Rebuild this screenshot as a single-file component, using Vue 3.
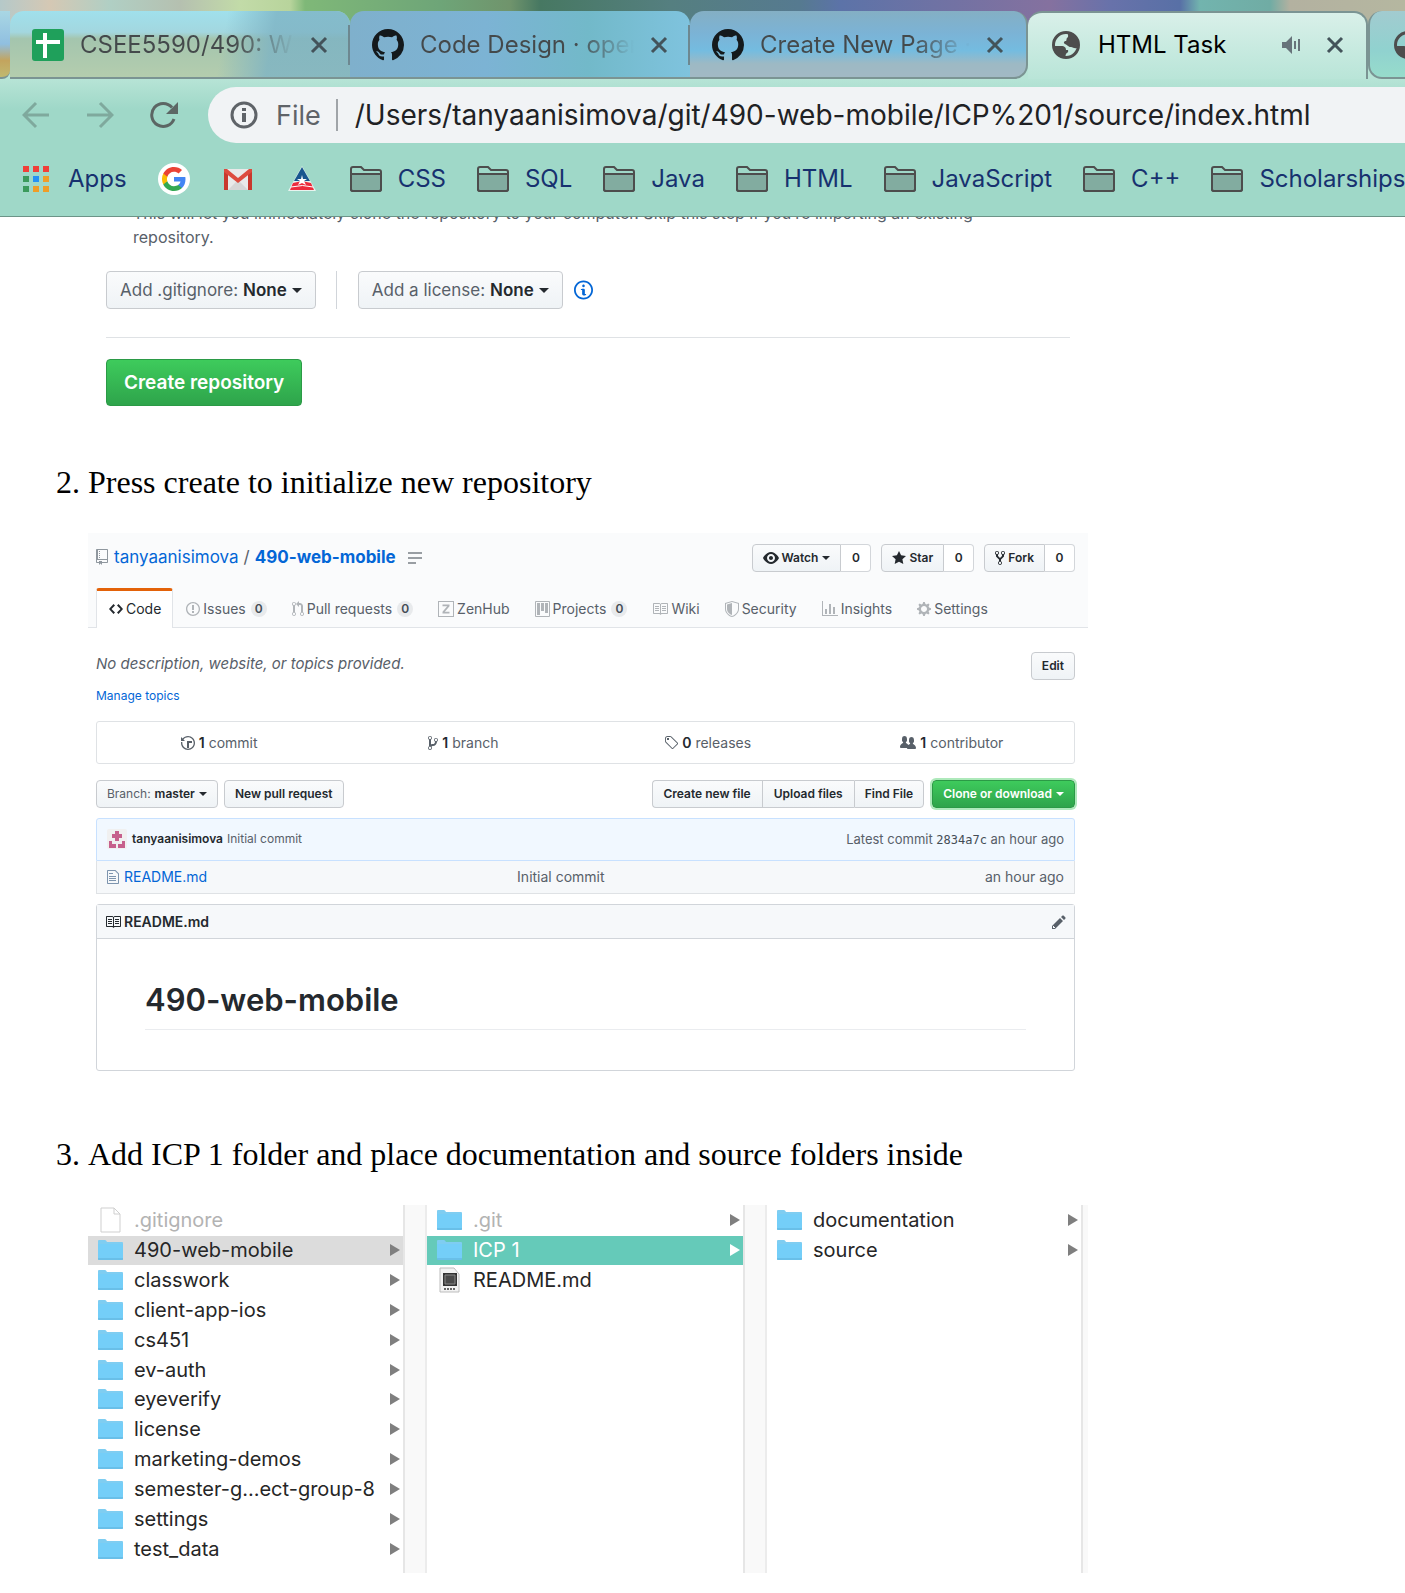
<script setup>
import { h } from 'vue'

const paths = {
  github: [16, 'M8 0C3.58 0 0 3.58 0 8c0 3.54 2.29 6.53 5.47 7.59.4.07.55-.17.55-.38 0-.19-.01-.82-.01-1.49-2.01.37-2.53-.49-2.69-.94-.09-.23-.48-.94-.82-1.13-.28-.15-.68-.52-.01-.53.63-.01 1.08.58 1.23.82.72 1.21 1.87.87 2.33.66.07-.52.28-.87.51-1.07-1.78-.2-3.64-.89-3.64-3.95 0-.87.31-1.59.82-2.15-.08-.2-.36-1.02.08-2.12 0 0 .67-.21 2.2.82.64-.18 1.32-.27 2-.27.68 0 1.36.09 2 .27 1.53-1.04 2.2-.82 2.2-.82.44 1.1.16 1.92.08 2.12.51.56.82 1.27.82 2.15 0 3.07-1.87 3.75-3.65 3.95.29.25.54.73.54 1.48 0 1.07-.01 1.93-.01 2.2 0 .21.15.46.55.38A8.013 8.013 0 0 0 16 8c0-4.42-3.58-8-8-8z'],
  repo: [12, 'M4 9H3V8h1v1zm0-3H3v1h1V6zm0-2H3v1h1V4zm0-2H3v1h1V2zm8-1v12c0 .55-.45 1-1 1H6v2l-1.5-1.5L3 16v-2H1c-.55 0-1-.45-1-1V1c0-.55.45-1 1-1h10c.55 0 1 .45 1 1zm-1 10H1v2h2v-1h3v1h5v-2zm0-10H2v9h9V1z'],
  code: [14, 'M9.5 3L8 4.5 11.5 8 8 11.5 9.5 13 14 8 9.5 3zm-5 0L0 8l4.5 5L6 11.5 2.5 8 6 4.5 4.5 3z'],
  issue: [14, 'M7 2.3c3.14 0 5.7 2.56 5.7 5.7s-2.56 5.7-5.7 5.7A5.71 5.71 0 0 1 1.3 8c0-3.14 2.56-5.7 5.7-5.7zM7 1C3.14 1 0 4.14 0 8s3.14 7 7 7 7-3.14 7-7-3.14-7-7-7zm1 3H6v5h2V4zm0 6H6v2h2v-2z'],
  pull: [12, 'M11 11.28V5c-.03-.78-.34-1.47-.94-2.06C9.46 2.35 8.78 2.03 8 2H7V0L4 3l3 3V4h1c.27.02.48.11.69.31.21.2.3.42.31.69v6.28A1.993 1.993 0 0 0 10 15a1.993 1.993 0 0 0 1-3.72zm-1 2.92c-.66 0-1.2-.55-1.2-1.2 0-.65.55-1.2 1.2-1.2.65 0 1.2.55 1.2 1.2 0 .65-.55 1.2-1.2 1.2zM4 3c0-1.11-.89-2-2-2a1.993 1.993 0 0 0-1 3.72v6.56A1.993 1.993 0 0 0 2 15a1.993 1.993 0 0 0 1-3.72V4.72c.59-.34 1-.98 1-1.72zm-.8 10c0 .66-.55 1.2-1.2 1.2-.65 0-1.2-.55-1.2-1.2 0-.65.55-1.2 1.2-1.2.65 0 1.2.55 1.2 1.2zM2 4.2C1.34 4.2.8 3.65.8 3c0-.65.55-1.2 1.2-1.2.65 0 1.2.55 1.2 1.2 0 .65-.55 1.2-1.2 1.2z'],
  zenhub: [16, 'M0 0h16v16H0V0zm1 1v14h14V1H1zm3.500 2.500h7v1.800l-4.700 5.400h4.700v1.800h-7v-1.800l4.700-5.400h-4.700V3.500z'],
  project: [15, 'M10 12h3V2h-3v10zm-4-2h3V2H6v8zm-4 4h3V2H2v12zm-1 1h13V1H1v14zM14 0H1a1 1 0 0 0-1 1v14a1 1 0 0 0 1 1h13a1 1 0 0 0 1-1V1a1 1 0 0 0-1-1z'],
  book: [16, 'M3 5h4v1H3V5zm0 3h4V7H3v1zm0 2h4V9H3v1zm11-5h-4v1h4V5zm0 2h-4v1h4V7zm0 2h-4v1h4V9zm2-6v9c0 .55-.45 1-1 1H9.500l-1 1-1-1H2c-.55 0-1-.45-1-1V3c0-.55.45-1 1-1h5.500l1 1 1-1H15c.55 0 1 .45 1 1zm-8 .5L7.500 3H2v9h6V3.500zm7-.5H9.500l-.5.5V12h6V3z'],
  shield: [14, 'M0 2l7-2 7 2v6.02C14 12.690 8.690 16 7 16c-1.690 0-7-3.310-7-7.980V2zm1 .75L7 1l6 1.750v5.268C13 12.104 8.449 15 7 15c-1.449 0-6-2.896-6-6.982V2.750zm1 .75L7 2v12c-1.207 0-5-2.482-5-5.985V3.500z'],
  graph: [16, 'M16 14v1H0V0h1v14h15zM5 13H3V8h2v5zm4 0H7V3h2v10zm4 0h-2V6h2v7z'],
  gear: [14, 'M14 8.77v-1.6l-1.94-.64-.45-1.09.88-1.84-1.13-1.13-1.81.91-1.09-.45-.69-1.92h-1.6l-.63 1.94-1.11.45-1.84-.88-1.13 1.13.91 1.81-.45 1.09L0 7.23v1.59l1.94.64.45 1.09-.88 1.84 1.13 1.13 1.81-.91 1.09.45.69 1.92h1.59l.63-1.94 1.11-.45 1.84.88 1.13-1.13-.92-1.81.47-1.09L14 8.75v.02zM7 11c-1.66 0-3-1.34-3-3s1.34-3 3-3 3 1.34 3 3-1.34 3-3 3z'],
  eye: [16, 'M8.06 2C3 2 0 8 0 8s3 6 8.06 6C13 14 16 8 16 8s-3-6-7.94-6zM8 12c-2.2 0-4-1.78-4-4 0-2.2 1.8-4 4-4 2.22 0 4 1.8 4 4 0 2.22-1.78 4-4 4zm2-4c0 1.11-.89 2-2 2-1.11 0-2-.89-2-2 0-1.11.89-2 2-2 1.11 0 2 .89 2 2z'],
  star: [14, 'M14 6l-4.9-.64L7 1 4.9 5.36 0 6l3.6 3.26L2.67 14 7 11.67 11.33 14l-.93-4.74L14 6z'],
  fork: [10, 'M8 1a1.993 1.993 0 0 0-1 3.72V6L5 8 3 6V4.72A1.993 1.993 0 0 0 2 1a1.993 1.993 0 0 0-1 3.72V6.5l3 3v1.78A1.993 1.993 0 0 0 5 15a1.993 1.993 0 0 0 1-3.72V9.5l3-3V4.72A1.993 1.993 0 0 0 8 1zM2 4.2C1.34 4.2.8 3.65.8 3c0-.65.55-1.2 1.2-1.2.65 0 1.2.55 1.2 1.2 0 .65-.55 1.2-1.2 1.2zm3 10c-.66 0-1.2-.55-1.2-1.2 0-.65.55-1.2 1.2-1.2.65 0 1.2.55 1.2 1.2 0 .65-.55 1.2-1.2 1.2zm3-10c-.66 0-1.2-.55-1.2-1.2 0-.65.55-1.2 1.2-1.2.65 0 1.2.55 1.2 1.2 0 .65-.55 1.2-1.2 1.2z'],
  history: [14, 'M8 13H6V6h5v2H8v5zM7 1C4.81 1 2.87 2.02 1.59 3.59L0 2v4h4L2.5 4.5C3.55 3.17 5.17 2.3 7 2.3c3.14 0 5.7 2.56 5.7 5.7s-2.56 5.7-5.7 5.7A5.71 5.71 0 0 1 1.3 8c0-.34.03-.67.09-1H.08C.03 7.33 0 7.66 0 8c0 3.86 3.14 7 7 7s7-3.14 7-7-3.14-7-7-7z'],
  branch: [10, 'M10 5c0-1.11-.89-2-2-2a1.993 1.993 0 0 0-1 3.72v.3c-.02.52-.23.98-.63 1.38-.4.4-.86.61-1.38.63-.83.02-1.48.16-2 .45V4.72a1.993 1.993 0 0 0-1-3.72C.88 1 0 1.89 0 3a2 2 0 0 0 1 1.72v6.56c-.59.35-1 .99-1 1.72 0 1.11.89 2 2 2 1.11 0 2-.89 2-2 0-.53-.2-1-.53-1.36.09-.06.48-.41.59-.47.25-.11.56-.17.94-.17 1.05-.05 1.95-.45 2.75-1.25S8.95 7.77 9 6.73h-.02C9.59 6.37 10 5.73 10 5zM2 1.8c.66 0 1.2.55 1.2 1.2 0 .65-.55 1.2-1.2 1.2C1.35 4.2.8 3.65.8 3c0-.65.55-1.2 1.2-1.2zm0 12.41c-.66 0-1.2-.55-1.2-1.2 0-.65.55-1.2 1.2-1.2.65 0 1.2.55 1.2 1.2 0 .65-.55 1.2-1.2 1.2zm6-8c-.66 0-1.2-.55-1.2-1.2 0-.65.55-1.2 1.2-1.2.65 0 1.2.55 1.2 1.2 0 .65-.55 1.2-1.2 1.2z'],
  tag: [14, 'M7.73 1.73C7.26 1.26 6.62 1 5.96 1H3.5C2.13 1 1 2.13 1 3.5v2.47c0 .66.27 1.3.73 1.77l6.06 6.06c.39.39 1.02.39 1.41 0l4.59-4.59a.996.996 0 0 0 0-1.41L7.73 1.73zM2.38 7.09c-.31-.3-.47-.7-.47-1.13V3.5c0-.88.72-1.59 1.59-1.59h2.47c.42 0 .83.16 1.13.47l6.14 6.13-4.73 4.73-6.13-6.15zM3.01 3h2v2H3V3h.01z'],
  people: [16, 'M16 12.999c0 .439-.45 1-1 1H7.995c-.539 0-.994-.447-.995-.999H1c-.54 0-1-.561-1-1 0-2.634 3-4 3-4s.229-.409 0-1c-.841-.621-1.058-.59-1-3 .058-2.419 1.367-3 2.5-3s2.442.58 2.5 3c.058 2.41-.159 2.379-1 3-.229.59 0 1 0 1s1.549.711 2.42 2.088C9.196 9.369 10 8.999 10 8.999s.229-.409 0-1c-.841-.62-1.058-.59-1-3 .058-2.419 1.367-3 2.5-3s2.437.581 2.495 3c.059 2.41-.158 2.38-1 3-.229.59 0 1 0 1s3.005 1.366 3.005 4z'],
  file: [12, 'M6 5H2V4h4v1zM2 8h7V7H2v1zm0 2h7V9H2v1zm0 2h7v-1H2v1zm10-7.500V14c0 .55-.45 1-1 1H1c-.55 0-1-.45-1-1V2c0-.55.45-1 1-1h7.500L12 4.500zM11 5L8 2H1v12h10V5z'],
  pencil: [14, 'M0 12v3h3l8-8-3-3-8 8zm3 2H1v-2h1v1h1v1zm10.3-9.3L12 6 9 3l1.3-1.3a.996.996 0 0 1 1.41 0l1.59 1.59c.39.39.39 1.02 0 1.41z'],
  info: [14, 'M6.3 5.69a.942.942 0 0 1-.28-.7c0-.28.09-.52.28-.7.19-.18.42-.28.7-.28.28 0 .52.09.7.28.18.19.28.42.28.7 0 .28-.09.52-.28.7a1 1 0 0 1-.7.3c-.28 0-.52-.11-.7-.3zM8 7.99c-.02-.25-.11-.48-.31-.69-.2-.19-.42-.3-.69-.31H6c-.27.02-.48.13-.69.31-.2.2-.3.44-.31.69h1v3c.02.27.11.5.31.69.2.2.42.31.69.31h1c.27 0 .48-.11.69-.31.2-.19.3-.42.31-.69H8V7.98v.01zM7 2.3c-3.14 0-5.7 2.54-5.7 5.68 0 3.14 2.56 5.7 5.7 5.7s5.7-2.55 5.7-5.7c0-3.15-2.56-5.69-5.7-5.69v.01zM7 .98c3.86 0 7 3.14 7 7s-3.14 7-7 7-7-3.12-7-7 3.14-7 7-7z'],
}

const Icon = (props) => {
  const [w, d] = paths[props.name]
  const height = props.size || 16
  return h('svg', { viewBox: `0 0 ${w} 16`, width: Math.round((w * height) / 16), height, 'aria-hidden': 'true' }, [
    h('path', { d, fill: 'currentColor', 'fill-rule': 'evenodd' }),
  ])
}
Icon.props = ['name', 'size']

const tabs = [
  { title: 'CSEE5590/490: W', icon: 'sheets', tone: 'one' },
  { title: 'Code Design · oper', icon: 'github', tone: 'two' },
  { title: 'Create New Page ·', icon: 'github', tone: 'three' },
  { title: 'HTML Task', icon: 'globe', tone: 'active' },
  { title: '', icon: 'globe', tone: 'last' },
]

const bookmarks = ['CSS', 'SQL', 'Java', 'HTML', 'JavaScript', 'C++', 'Scholarships']

const repoTabs = [
  { label: 'Code', icon: 'code', current: true },
  { label: 'Issues', icon: 'issue', count: 0 },
  { label: 'Pull requests', icon: 'pull', count: 0 },
  { label: 'ZenHub', icon: 'zenhub' },
  { label: 'Projects', icon: 'project', count: 0 },
  { label: 'Wiki', icon: 'book' },
  { label: 'Security', icon: 'shield' },
  { label: 'Insights', icon: 'graph' },
  { label: 'Settings', icon: 'gear' },
]

const social = [
  { label: 'Watch', icon: 'eye', caret: true },
  { label: 'Star', icon: 'star' },
  { label: 'Fork', icon: 'fork' },
]

const stats = [
  { icon: 'history', n: 1, label: 'commit' },
  { icon: 'branch', n: 1, label: 'branch' },
  { icon: 'tag', n: 0, label: 'releases' },
  { icon: 'people', n: 1, label: 'contributor' },
]

const dir = (name, state = '') => ({ name, kind: 'dir', state })
const columns = [
  [
    { name: '.gitignore', kind: 'blank', state: 'dim' },
    dir('490-web-mobile', 'open'),
    ...['classwork', 'client-app-ios', 'cs451', 'ev-auth', 'eyeverify', 'license', 'marketing-demos',
      'semester-g...ect-group-8', 'settings', 'test_data'].map((n) => dir(n)),
  ],
  [dir('.git', 'dim'), dir('ICP 1', 'selected'), { name: 'README.md', kind: 'md', state: '' }],
  [dir('documentation'), dir('source')],
]
</script>

<template>
  <div class="browser">
    <header class="chrome">
      <div class="tabstrip">
        <div class="stub"></div>
        <div v-for="t in tabs" :key="t.tone" class="tab" :class="t.tone">
          <svg v-if="t.icon === 'sheets'" class="favicon" viewBox="0 0 32 32">
            <rect width="32" height="32" rx="3" fill="#1fa05b" />
            <path d="M4 11h24v4H15v14h-4V15H4zM11 4h4v8h-4z" fill="#fff" />
          </svg>
          <Icon v-else-if="t.icon === 'github'" name="github" size="32" class="favicon gh" />
          <svg v-else class="favicon" viewBox="0 0 32 32">
            <circle cx="16" cy="16" r="12.500" fill="none" stroke="#4d4d4d" stroke-width="3" />
            <path d="M17 3c6 0 11 5 12 11l-2 5c-3 1-4-1-6-1-3 0-3-2-6-3-2-1-1-3 1-3 1-1 0-2 1-3 2-1 1-4 0-6z" fill="#4d4d4d" />
            <path d="M3 17h8c4 0 5 2 5 4h2c1 3-2 3-2 4-1 2 0 3-1 4C8 29 3 23 3 17z" fill="#4d4d4d" />
          </svg>
          <template v-if="t.title">
            <span class="tab-title">{{ t.title }}</span>
            <svg v-if="t.tone === 'active'" class="speaker" viewBox="0 0 20 20">
              <path d="M1 7h4l6-6v18l-6-6H1zM13 6h2v8h-2zM17 4h2v12h-2z" fill="#67737a" />
            </svg>
            <button class="close" aria-label="Close tab">
              <svg viewBox="0 0 18 18"><path d="M2 2l14 14M16 2L2 16" stroke="currentColor" stroke-width="3" /></svg>
            </button>
            <i class="sep"></i>
          </template>
        </div>
      </div>

      <div class="toolbar">
        <button class="nav" aria-label="Back">
          <svg viewBox="0 0 28 28"><path d="M27 14H3M14 2L2 14l12 12" fill="none" stroke="#7fa99d" stroke-width="3" /></svg>
        </button>
        <button class="nav" aria-label="Forward">
          <svg viewBox="0 0 28 28"><path d="M1 14h24M14 2l12 12-12 12" fill="none" stroke="#7fa99d" stroke-width="3" /></svg>
        </button>
        <button class="nav" aria-label="Reload">
          <svg viewBox="0 0 28 28">
            <path d="M24 18A11.500 11.500 0 1 1 22 6.500" fill="none" stroke="#5c6664" stroke-width="3" />
            <path d="M28 1v12H16z" fill="#5c6664" />
          </svg>
        </button>
        <div class="omnibox">
          <svg class="site-info" viewBox="0 0 28 28">
            <circle cx="14" cy="14" r="12" fill="none" stroke="#5f6368" stroke-width="3" />
            <path d="M12 7h4v3h-4zM12 12h4v9h-4z" fill="#5f6368" />
          </svg>
          <label for="url">File</label>
          <i class="bar"></i>
          <input id="url" type="text" value="/Users/tanyaanisimova/git/490-web-mobile/ICP%201/source/index.html" />
        </div>
      </div>

      <nav class="bookmarks">
        <a href="#" class="apps">
          <svg viewBox="0 0 28 28">
            <path d="M1 1h6v6H1zM11 1h6v6h-6zM21 1h6v6h-6z" fill="#f13f38" />
            <path d="M1 11h6v6H1zM1 21h6v6H1z" fill="#3b9a5c" />
            <path d="M11 11h6v6h-6z" fill="#2492f5" />
            <path d="M21 11h6v6h-6zM11 21h6v6h-6zM21 21h6v6h-6z" fill="#ef9d28" />
          </svg>
          Apps
        </a>
        <a href="#" class="mark" aria-label="Google">
          <svg viewBox="0 0 32 32">
            <circle cx="16" cy="16" r="16" fill="#fff" />
            <g transform="translate(4 4)">
              <path d="M23.500 12.300c0-.9-.1-1.500-.2-2.300H12v4.500h6.500c-.3 1.500-1.100 2.700-2.400 3.600v3h3.900c2.300-2.100 3.500-5.200 3.500-8.800z" fill="#4285f4" />
              <path d="M12 24c3.200 0 6-1.100 8-2.900l-3.900-3c-1.100.7-2.500 1.200-4.100 1.200-3.100 0-5.800-2.100-6.700-5H1.300v3.100C3.300 21.300 7.300 24 12 24z" fill="#34a853" />
              <path d="M5.300 14.300a7.200 7.200 0 0 1 0-4.600V6.600h-4a12 12 0 0 0 0 10.800z" fill="#fbbc05" />
              <path d="M12 4.700c1.800 0 3.300.6 4.600 1.800L20 3.100C18 1.200 15.200 0 12 0 7.300 0 3.300 2.700 1.300 6.600l4 3.100c.9-2.900 3.600-5 6.700-5z" fill="#ea4335" />
            </g>
          </svg>
        </a>
        <a href="#" class="mark" aria-label="Gmail">
          <svg viewBox="0 0 32 32">
            <path d="M2 6h28v21H2z" fill="#e9e9e9" />
            <path d="M6 27l10-10 10 10z" fill="#d6d6d6" />
            <path d="M2 27V6l4 2v19zM30 27V6l-4 2v19z" fill="#c9382d" />
            <path d="M2 6h3l11 9 11-9h3v3L16 20 2 9z" fill="#dd4b3e" />
          </svg>
        </a>
        <a href="#" class="mark" aria-label="Bookmark">
          <svg viewBox="0 0 32 32">
            <path d="M16 3l14 25H2z" fill="#e8f4ef" />
            <path d="M16 4l8 14H8z" fill="#17568f" />
            <path d="M7 20l9-2 9 2 3 7H4z" fill="#ec2b3c" />
            <path d="M16 12l1 4h4l-3 2 2 4-4-2-4 2 2-4-3-2h4z" fill="#fff" />
            <path d="M5 24q12-3 22 0" fill="none" stroke="#fff" />
          </svg>
        </a>
        <a v-for="b in bookmarks" :key="b" href="#" class="folder-link">
          <svg viewBox="0 0 32 26">
            <path d="M1 3q0-2 2-2h8l3 3h15q2 0 2 2v17q0 2-2 2H3q-2 0-2-2z" fill="#9fd8c8" stroke="#4d4d4d" stroke-width="2" />
            <path d="M1 8h30v15q0 2-2 2H3q-2 0-2-2z" fill="#82aca0" stroke="#4d4d4d" stroke-width="2" />
          </svg>
          {{ b }}
        </a>
      </nav>
    </header>

    <main>
      <ol>
        <li class="first">
          <section class="new-repo">
            <p>This will let you immediately clone the repository to your computer. Skip this step if you’re importing an existing repository.</p>
            <div class="choices">
              <button class="btn">Add .gitignore: <b>None</b><i class="caret"></i></button>
              <i class="rule"></i>
              <button class="btn">Add a license: <b>None</b><i class="caret"></i></button>
              <Icon name="info" size="22" class="info" />
            </div>
            <button class="btn green create">Create repository</button>
          </section>
        </li>

        <li>
          <p class="step">Press create to initialize new repository</p>
          <section class="repo">
            <div class="repo-head">
              <div class="title-row">
                <h2>
                  <Icon name="repo" /><a href="#">tanyaanisimova</a><span>/</span><a href="#" class="strong">490-web-mobile</a>
                </h2>
                <svg class="lines" viewBox="0 0 14 12"><path d="M0 1h14M0 6h14M0 11h8" stroke="#999ea3" stroke-width="2" /></svg>
                <div v-for="s in social" :key="s.label" class="social">
                  <button class="btn small"><Icon :name="s.icon" />{{ s.label }}<i v-if="s.caret" class="caret"></i></button>
                  <a href="#">0</a>
                </div>
              </div>
              <nav class="repo-tabs">
                <a v-for="t in repoTabs" :key="t.label" href="#" :class="{ current: t.current }">
                  <Icon :name="t.icon" />{{ t.label }}<span v-if="t.count !== undefined" class="count">{{ t.count }}</span>
                </a>
              </nav>
            </div>

            <div class="repo-body">
              <div class="about">
                <em>No description, website, or topics provided.</em>
                <button class="btn small">Edit</button>
              </div>
              <a href="#" class="topics">Manage topics</a>

              <ul class="stats">
                <li v-for="s in stats" :key="s.label"><Icon :name="s.icon" /><b>{{ s.n }}</b> {{ s.label }}</li>
              </ul>

              <div class="actions">
                <button class="btn small"><span class="soft">Branch:</span> master<i class="caret"></i></button>
                <button class="btn small">New pull request</button>
                <div class="group">
                  <button class="btn small">Create new file</button>
                  <button class="btn small">Upload files</button>
                  <button class="btn small">Find File</button>
                </div>
                <button class="btn small green ring">Clone or download<i class="caret"></i></button>
              </div>

              <div class="commit">
                <svg class="avatar" viewBox="0 0 20 20">
                  <rect width="20" height="20" rx="2" fill="#f0f0f0" />
                  <path d="M8 2h4v3h3v4h-3v3H8V9H5V5h3zM2 12h3v3h4v4H2zM18 12h-3v3h-4v4h7z" fill="#c6608c" />
                </svg>
                <b>tanyaanisimova</b> <span>Initial commit</span>
                <span class="latest">Latest commit <code>2834a7c</code> an hour ago</span>
              </div>
              <table class="files">
                <tbody>
                  <tr>
                    <td class="name"><div><Icon name="file" /><a href="#">README.md</a></div></td>
                    <td>Initial commit</td>
                    <td class="age">an hour ago</td>
                  </tr>
                </tbody>
              </table>

              <article class="readme">
                <h3><Icon name="book" />README.md<Icon name="pencil" class="edit" /></h3>
                <div class="readme-body"><h1>490-web-mobile</h1></div>
              </article>
            </div>
          </section>
        </li>

        <li>
          <p class="step">Add ICP 1 folder and place documentation and source folders inside</p>
          <section class="finder">
            <ul v-for="(col, i) in columns" :key="i">
              <li v-for="f in col" :key="f.name" :class="f.state">
                <svg v-if="f.kind === 'dir'" viewBox="0 0 26 26">
                  <path d="M0 4q0-1 1-1h6q1 0 2 2h15q1 0 1 1v4H0z" fill="#7fcdf1" />
                  <path d="M0 7h25v15q0 1-1 1H1q-1 0-1-1z" fill="#74cef8" />
                  <path d="M0 22h25" stroke="#5fb0d8" />
                </svg>
                <svg v-else-if="f.kind === 'blank'" viewBox="0 0 26 26">
                  <path d="M3 1h13l6 6v18H3zM16 1v6h6" fill="#fff" stroke="#cfcfcf" />
                </svg>
                <svg v-else viewBox="0 0 26 26">
                  <path d="M3 1h14l5 6v18H3z" fill="#f2f2f2" stroke="#bdbdbd" />
                  <path d="M6 6h14v13H6z" fill="#333" />
                  <path d="M8 8h10v9H8z" fill="#4a4a4a" stroke="#888" />
                  <path d="M7 22h12" stroke="#666" stroke-width="2" stroke-dasharray="2 1" />
                </svg>
                <span>{{ f.name }}</span>
                <i v-if="f.kind === 'dir'" class="arrow"></i>
              </li>
            </ul>
          </section>
        </li>
      </ol>
    </main>
  </div>
</template>

<style>
body { margin: 0; background: #fff; }
</style>

<style scoped>
* { box-sizing: border-box; }
.browser { font-family: Inter, "Liberation Sans", sans-serif; overflow: hidden; }
button, input { font: inherit; color: inherit; margin: 0; }
a { color: inherit; text-decoration: none; }
svg { flex: none; display: block; }
i { display: block; flex: none; }

/* browser frame */
.chrome { position: relative; z-index: 1; background: #9fd8c8; border-bottom: 1px solid #6c9488; }
.tabstrip {
  display: flex; padding-top: 11px; height: 79px; overflow: hidden;
  background:
    linear-gradient(90deg, #b5c9c9 0, #d5c8b4 50px, #b0cfc4 110px, #b5c0b0 180px, #c2dba8 240px, #b8d49c 290px, #7fb878 305px, #6ea578 440px, #70946c 510px, #477862 540px, #557f80 670px, #567a90 800px, #5c73a8 840px, #85719f 1050px, #6872aa 1110px, #5870a6 1180px, #72b4ae 1200px, #70aca4 1270px, #b3b1a0 1290px, #b5b7a0 1405px) 0 0 / 100% 48px no-repeat,
    #b7e4d6;
}
.stub { flex: 0 0 10px; background: linear-gradient(#a9d7e4, #90bfe0 50%, #c3a45e 75%, #c0b970); border-bottom: 2px solid #7b9493; border-radius: 0 0 8px 0; }
.tab {
  flex: 0 0 340px; display: flex; align-items: center; min-width: 0; padding: 2px 0 0 22px;
  border-radius: 14px 14px 0 0; border-bottom: 2px solid #7b9493; color: #44494b; font-size: 24px; line-height: 32px;
}
.tab.one { background: linear-gradient(100deg, transparent 62%, #7db3c4cc 76%), linear-gradient(#a0e0ec, #a3d7df 32%, #a4c5ae 42%, #b4cdae); }
.tab.two { background: linear-gradient(90deg, #7fb0cc, #7cb3d4 40%, #72b9c9 70%, #7fc3de); }
.tab.three { flex-basis: 338px; background: linear-gradient(#84afc4, #7bb3d6 35%, #74bce0 60%, #9db9c4 80%, #a2b9c4); border-right: 2px solid #7b9493; border-radius: 14px 14px 14px 0; }
.tab.active { padding: 0 0 2px 22px; background: linear-gradient(#d9f0e9, #b9e5d8); border: 2px solid #7b9493; border-bottom: 0; border-left: 0; color: #000; }
.tab.last { background: linear-gradient(#a2cbd0, #90d2cf 60%, #97dccb); border-radius: 14px 0 0 14px; border-left: 2px solid #7b9493; }
.favicon { width: 32px; height: 32px; }
.gh { color: #14191c; }
.tab-title { flex: 1; min-width: 0; margin: 0 16px; white-space: nowrap; }
.one .tab-title, .two .tab-title, .three .tab-title { color: transparent; background: linear-gradient(90deg, #44494b 72%, #44494b00) text; }
.speaker { width: 20px; height: 20px; margin-right: 25px; }
.close { flex: none; border: 0; background: none; padding: 0; width: 18px; height: 18px; color: #43535a; }
.close svg { width: 18px; height: 18px; }
.sep { width: 2px; height: 40px; margin-left: 20px; background: #6d8890; }
.three .sep, .active .sep { background: none; }

.toolbar { display: flex; align-items: center; padding: 8px 0 0 22px; height: 64px; background: linear-gradient(#b7e4d6, #9fd8c8 30px); }
.nav { flex: none; width: 28px; height: 28px; border: 0; padding: 0; background: none; margin-right: 36px; }
.nav svg { width: 28px; height: 28px; }
.nav:nth-child(3) { margin-right: 30px; }
.omnibox { flex: 1; min-width: 0; display: flex; align-items: center; height: 56px; padding-left: 22px; border-radius: 28px 0 0 28px; background: #f1f3f5; font-size: 27px; color: #5f6368; }
.site-info { width: 28px; height: 28px; margin-right: 18px; }
.bar { width: 2px; height: 32px; margin: 0 17px 0 15px; background: #a0a4a8; }
.omnibox input { flex: 1; min-width: 0; border: 0; padding: 0; background: none; outline: 0; color: #202124; font-size: 28px; }

.bookmarks { display: flex; align-items: center; height: 73px; padding: 0 0 2px 22px; font-size: 24px; color: #17316f; white-space: nowrap; }
.bookmarks a { display: flex; align-items: center; flex: none; }
.apps { margin-right: 31px; gap: 18px; }
.apps svg { width: 28px; height: 28px; }
.mark { margin-right: 32px; }
.mark svg { width: 32px; height: 32px; }
.folder-link { gap: 16px; margin-right: 31px; }
.folder-link svg { width: 32px; height: 26px; }

/* page */
main { margin-top: -16px; padding-bottom: 20px; }
ol { margin: 0; padding: 0 0 0 88px; font: 32px/36px "Liberation Serif", serif; color: #000; }
ol > li { max-width: 1000px; }
ol > .first { list-style: none; }
section { font-family: Inter, "Liberation Sans", sans-serif; color: #586069; }
.step { margin: 0 0 33px; }

.btn {
  display: flex; align-items: center; flex: none; white-space: nowrap; height: 38px; padding: 0 13px;
  border: 1px solid #c8cbcf; border-radius: 4px; background: linear-gradient(#fafbfc, #eff3f6);
  font-size: 17px; line-height: 20px; color: #586069;
}
.btn b { margin-left: 5px; font-weight: 600; color: #24292e; }
.btn.small { height: 28px; padding: 0 10px; font-size: 12px; font-weight: 600; color: #24292e; }
.btn .soft { font-weight: 400; color: #586069; margin-right: 4px; }
.btn.green { border-color: #2b9a46; background: linear-gradient(#3ecb5c, #2ea44b); color: #fff; font-weight: 600; }
.caret { border: 5px solid transparent; border-top-color: currentColor; border-bottom: 0; margin-left: 5px; color: #24292e; }
.small .caret { border-width: 4px; border-bottom: 0; margin-left: 4px; }
.green .caret { color: #fff; }

.new-repo { padding: 0 18px; margin-bottom: 58px; }
.new-repo p { margin: 0 40px 22px 27px; font-size: 16px; line-height: 24px; }
.choices { display: flex; align-items: center; padding-bottom: 28px; border-bottom: 1px solid #dfe2e5; margin-bottom: 21px; }
.rule { width: 1px; height: 38px; margin: 0 21px 0 20px; background: #d1d5da; }
.info { margin-left: 11px; color: #0366d6; }
.btn.create { height: 47px; padding: 0 17px; font-size: 19px; }

.repo { font-size: 14px; line-height: 20px; margin-bottom: 65px; }
.repo-head { background: #fafbfc; border-bottom: 1px solid #e1e4e8; height: 95px; padding: 11px 13px 0 8px; display: flex; flex-direction: column; }
.title-row { display: flex; align-items: center; height: 28px; }
h2 { display: flex; align-items: center; margin: 0 0 2px; font-size: 17px; line-height: 24px; font-weight: 400; color: #586069; }
h2 svg { margin-right: 6px; color: #8f979e; }
h2 a { color: #0366d6; }
h2 span { margin: 0 5px; }
.strong { font-weight: 700; }
.lines { width: 14px; height: 12px; margin: 0 auto 0 12px; }
.social { display: flex; margin-left: 10px; }
.social .btn { border-radius: 4px 0 0 4px; }
.social svg { margin-right: 3px; }
.social a { width: 30px; border: 1px solid #d3d6da; border-left: 0; border-radius: 0 4px 4px 0; background: #fff; text-align: center; font-size: 12px; font-weight: 600; line-height: 26px; color: #24292e; }
.repo-tabs { display: flex; margin-top: auto; margin-bottom: -1px; height: 40px; }
.repo-tabs a { display: flex; align-items: center; padding: 3px 11px 2px 12px; border: 1px solid transparent; border-bottom: 0; }
.repo-tabs svg { margin-right: 3px; color: #b0b4b8; }
.repo-tabs .current { padding-top: 0; border-color: #e1e4e8; border-top: 3px solid #e36209; border-radius: 3px 3px 0 0; background: #fff; color: #24292e; }
.repo-tabs .current svg { color: #24292e; }
.count { min-width: 16px; padding: 0 4px; margin-left: 5px; border-radius: 10px; background: #e8eaec; font-size: 12px; line-height: 16px; font-weight: 600; text-align: center; color: #444d56; }

.repo-body { padding: 24px 13px 0 8px; }
.about { display: flex; justify-content: space-between; align-items: flex-start; height: 28px; font-size: 15px; line-height: 24px; }
.topics { display: block; margin: 6px 0 15px; font-size: 12px; color: #0366d6; }
ul { list-style: none; margin: 0; padding: 0; }
.stats { display: flex; height: 43px; border: 1px solid #dfe2e5; border-radius: 3px; }
.stats li { flex: 1; display: flex; justify-content: center; align-items: center; gap: 4px; }
.stats b { font-weight: 600; color: #24292e; }
.actions { display: flex; gap: 6px; margin: 16px 0 10px; }
.group { display: flex; margin-left: auto; margin-right: 2px; }
.group .btn { padding: 0 11px; border-radius: 0; border-right-width: 0; }
.group .btn:first-child { border-radius: 4px 0 0 4px; }
.group .btn:last-child { padding: 0 10px; border-radius: 0 4px 4px 0; border-right-width: 1px; }
.ring { box-shadow: 0 0 0 2px #aee9bb; }
.commit { display: flex; align-items: center; gap: 4px; height: 43px; padding: 0 10px 2px; border: 1px solid #c8e1ff; border-radius: 3px 3px 0 0; background: #f1f8ff; font-size: 12px; }
.commit b { font-weight: 600; color: #24292e; }
.avatar { width: 20px; height: 20px; margin-right: 1px; }
.latest { margin-left: auto; font-size: 13px; }
code { font: 12px "DejaVu Sans Mono", monospace; color: #444d56; }
.files { width: 100%; table-layout: fixed; border-collapse: separate; border-spacing: 0; border: 1px solid #dfe2e5; border-top: 0; background: #f6f8fa; font-size: 14px; line-height: 20px; }
.files td { padding: 6px 0; }
.files .name { width: 43%; }
.name div { display: flex; align-items: center; gap: 5px; padding-left: 10px; color: #7d94ae; }
.name a { color: #0366d6; }
.files .age { text-align: right; padding-right: 10px; }
.readme { margin-top: 10px; border: 1px solid #d1d5da; border-radius: 3px; }
.readme h3 { display: flex; align-items: center; margin: 0; height: 34px; padding: 0 8px; border-bottom: 1px solid #d1d5da; background: #f6f8fa; font-size: 14px; font-weight: 600; color: #24292e; gap: 3px; }
.edit { margin-left: auto; color: #586069; }
.readme-body { padding: 41px 48px 40px; }
h1 { margin: 0; padding-bottom: 9px; border-bottom: 1px solid #eaecef; font-size: 31px; line-height: 40px; font-weight: 600; color: #24292e; }

.finder { display: grid; grid-template-columns: 339px 340px 321px; height: 368px; font-size: 20px; line-height: 24px; color: #262626; }
.finder ul {
  display: grid; grid-template-rows: repeat(12, 1fr); padding: 0 24px 10px 0;
  background: linear-gradient(to left, #ececec 2px, #f9f9f9 2px 22px, #e6e6e6 22px 24px, transparent 24px);
}
.finder ul:last-child { padding-right: 7px; background: linear-gradient(to left, #f9f9f9 5px, #e6e6e6 5px 7px, transparent 7px); }
.finder li { display: flex; align-items: center; gap: 10px; padding: 0 3px 0 10px; border-top: 1px solid transparent; background-clip: padding-box; }
.finder svg { width: 26px; height: 26px; }
.finder .open { background-color: #dcdcdc; }
.finder .selected { background-color: #65cab9; color: #fff; }
.finder .dim { color: #b3b3b3; }
.arrow { margin-left: auto; border: 6px solid transparent; border-left: 10px solid #7f7f7f; border-right: 0; }
.selected .arrow { border-left-color: #fff; }
</style>
